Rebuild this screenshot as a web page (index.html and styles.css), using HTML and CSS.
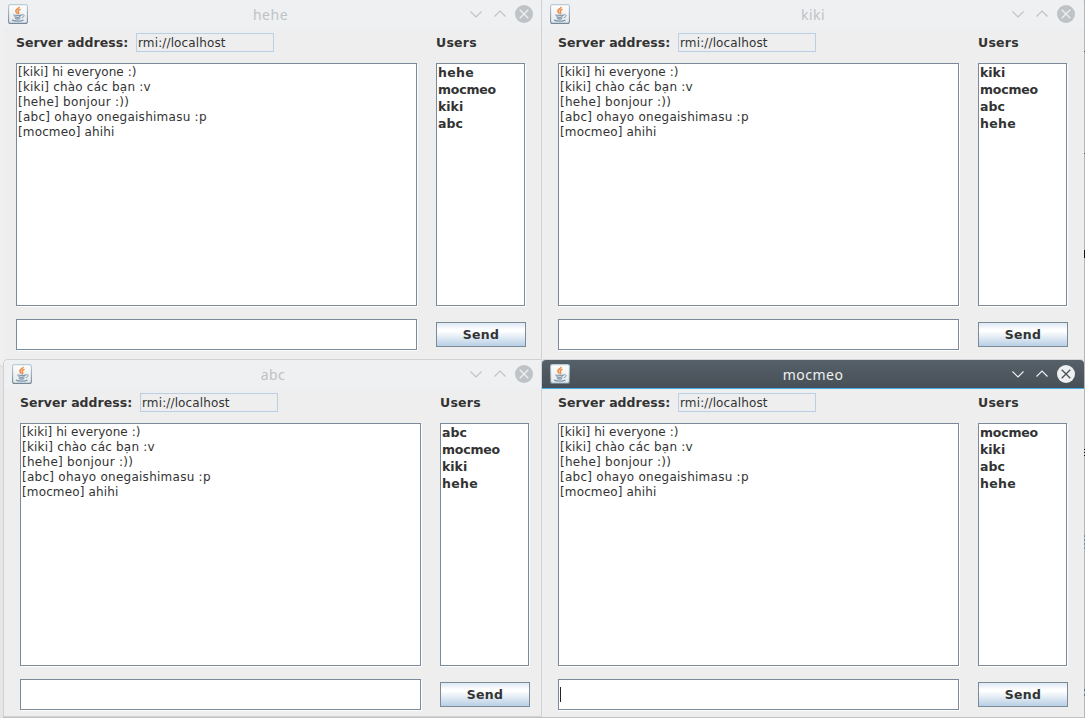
FILE: index.html
```html
<!DOCTYPE html>
<html lang="en">
<head>
<meta charset="utf-8">
<title>RMI chat</title>
<link rel="stylesheet" href="styles.css">
</head>
<body>
<svg width="0" height="0" class="defs">
  <symbol id="java" viewBox="0 0 20 20">
    <linearGradient id="tile" x1="0" y1="0" x2="0" y2="1"><stop offset="0" stop-color="#fff"/><stop offset="1" stop-color="#e4e7e9"/></linearGradient>
    <linearGradient id="edge" x1="0" y1="0" x2="0" y2="1"><stop offset="0" stop-color="#b9ccd9"/><stop offset="1" stop-color="#73889a"/></linearGradient>
    <rect x=".6" y=".6" width="18.8" height="18.8" rx="2" fill="url(#tile)" stroke="url(#edge)" stroke-width="1.1"/>
    <path d="M11 2.700c.6 1.800-3.500 2.500-3.200 4.500.2 1.200 1.300 1.600 1.700 2.600M12.500 5.300c-2.300.8-2.900 1.700-2 2.800.5.600.3 1.200-.3 1.700" fill="none" stroke="#ee8a43" stroke-width="1.500"/>
    <path d="M5.300 10.800c1.500.8 6.700.8 8.500 0M6.400 12.700c1.500.6 4.700.6 6.200 0M7 14.500c1.400.5 3.900.5 5.200 0M4 16.200c2.500 1.200 9.500 1.200 11.500-.3" fill="none" stroke="#7f98ad" stroke-width="1.300"/>
    <path d="M13.700 10.900c3.300-1 3.100 2 .1 2.800" fill="none" stroke="#7f98ad" stroke-width="1"/>
  </symbol>
  <symbol id="controls" viewBox="0 0 66 20">
    <path d="M2.500 7.500l5.500 5.500 5.500-5.500M26.500 12.500l5.500-5.500 5.500 5.500" fill="none" stroke="currentColor" stroke-width="1.100"/>
    <circle cx="56" cy="10" r="9" fill="currentColor"/>
    <path d="M51.700 5.700l8.600 8.600M60.300 5.700l-8.600 8.600" class="cross"/>
  </symbol>
</svg>
<main class="desktop">
  <section class="window hehe">
    <header class="titlebar"><svg class="java"><use href="#java"/></svg><h1 class="title">hehe</h1><svg class="controls"><use href="#controls"/></svg></header>
    <div class="content">
      <div class="address"><label class="label">Server address:</label><div class="host">rmi://localhost</div></div>
      <div class="users-label">Users</div>
      <div class="box log"><p class="l1">[kiki] hi everyone :)</p><p class="l2">[kiki] chào các bạn :v</p><p class="l3">[hehe] bonjour :))</p><p class="l4">[abc] ohayo onegaishimasu :p</p><p class="l5">[mocmeo] ahihi</p></div>
      <ul class="box users"><li class="wide">hehe</li><li class="long">mocmeo</li><li>kiki</li><li>abc</li></ul>
      <div class="box message"></div>
      <button class="send">Send</button>
    </div>
  </section>
  <section class="window kiki">
    <header class="titlebar"><svg class="java"><use href="#java"/></svg><h1 class="title">kiki</h1><svg class="controls"><use href="#controls"/></svg></header>
    <div class="content">
      <div class="address"><label class="label">Server address:</label><div class="host">rmi://localhost</div></div>
      <div class="users-label">Users</div>
      <div class="box log"><p class="l1">[kiki] hi everyone :)</p><p class="l2">[kiki] chào các bạn :v</p><p class="l3">[hehe] bonjour :))</p><p class="l4">[abc] ohayo onegaishimasu :p</p><p class="l5">[mocmeo] ahihi</p></div>
      <ul class="box users"><li>kiki</li><li class="long">mocmeo</li><li>abc</li><li class="wide">hehe</li></ul>
      <div class="box message"></div>
      <button class="send">Send</button>
    </div>
  </section>
  <section class="window abc">
    <header class="titlebar"><svg class="java"><use href="#java"/></svg><h1 class="title">abc</h1><svg class="controls"><use href="#controls"/></svg></header>
    <div class="content">
      <div class="address"><label class="label">Server address:</label><div class="host">rmi://localhost</div></div>
      <div class="users-label">Users</div>
      <div class="box log"><p class="l1">[kiki] hi everyone :)</p><p class="l2">[kiki] chào các bạn :v</p><p class="l3">[hehe] bonjour :))</p><p class="l4">[abc] ohayo onegaishimasu :p</p><p class="l5">[mocmeo] ahihi</p></div>
      <ul class="box users"><li>abc</li><li class="long">mocmeo</li><li>kiki</li><li class="wide">hehe</li></ul>
      <div class="box message"></div>
      <button class="send">Send</button>
    </div>
  </section>
  <section class="window mocmeo active">
    <header class="titlebar"><svg class="java"><use href="#java"/></svg><h1 class="title">mocmeo</h1><svg class="controls"><use href="#controls"/></svg></header>
    <div class="content">
      <div class="address"><label class="label">Server address:</label><div class="host">rmi://localhost</div></div>
      <div class="users-label">Users</div>
      <div class="box log"><p class="l1">[kiki] hi everyone :)</p><p class="l2">[kiki] chào các bạn :v</p><p class="l3">[hehe] bonjour :))</p><p class="l4">[abc] ohayo onegaishimasu :p</p><p class="l5">[mocmeo] ahihi</p></div>
      <ul class="box users"><li class="long">mocmeo</li><li>kiki</li><li>abc</li><li class="wide">hehe</li></ul>
      <div class="box message"><span class="caret"></span></div>
      <button class="send">Send</button>
    </div>
  </section>
  <i class="mark edge"></i><i class="mark m1"></i><i class="mark m2"></i><i class="mark m3"></i><i class="mark m4"></i><i class="mark m5"></i><i class="mark m6"></i>
</main>
</body>
</html>
```
FILE: styles.css
```css
* { box-sizing: border-box; }
body { margin: 0; overflow: hidden; background: #e4e5e6; color: #333; font: 12px/15px "DejaVu Sans", sans-serif; }
.defs { position: absolute; }
.desktop { position: relative; width: 1085px; height: 718px; overflow: hidden; background: #e6e6e6; }

/* Windows on the desktop */
.window { position: absolute; width: 542px; height: 360px; background: #eee; border-right: 1px solid #cfd3d7; }
.hehe { left: 0; top: 0; height: 367px; border-right-color: #eee; border-bottom: 1px solid #cfd1d3; border-radius: 0 0 0 3px; box-shadow: inset 4px 0 #eff0f1; }
.kiki { left: 541px; top: 0; width: 543px; border-left: 1px solid #cfd3d7; border-right: 0; border-radius: 0 4px 0 0; }
.abc { left: 3px; top: 359px; width: 538px; height: 358px; border: 1px solid #cfd1d3; border-right: 0; border-radius: 5px 0 0 0; box-shadow: 0 1px 0 #c3c3c3; }
.mocmeo { left: 541px; top: 359px; width: 543px; height: 358px; border: 1px solid #cfd3d7; border-width: 1px 0 0 1px; border-radius: 4px 4px 0 0; box-shadow: 0 1px 0 #c3c3c3; }

.titlebar { display: grid; grid-template-columns: 36px 1fr 36px; height: 28px; background: #eff0f1; position: relative; color: #bdc3c7; border-radius: 4px 4px 0 0; }
.java { width: 20px; height: 20px; margin: 4px 0 0 8px; }
.title { margin: 0; text-align: center; font: 14px/29px "Noto Sans", sans-serif; letter-spacing: .5px; }
.abc .title { padding-left: 1px; }
.controls { position: absolute; right: 8px; top: 4px; width: 66px; height: 20px; }
.hehe .controls, .abc .controls { right: 7px; }
.cross { fill: none; stroke: var(--cross, #eff0f1); stroke-width: 1.3; }
.active .titlebar { height: 29px; background: linear-gradient(#566069, #475057); border-bottom: 1px solid #3daee9; color: #eff0f1; margin-bottom: -1px; }
.active .controls { --cross: #475057; }

/* Chat form */
.content { display: grid; grid-template-columns: 402px 90px; grid-template-rows: 19px 243px 31px; column-gap: 18px; row-gap: 12px; padding: 5px 0 0 16px; }
.address { display: flex; }
.label { width: 120px; line-height: 20px; font-size: 12.5px; font-weight: bold; letter-spacing: .05px; }
.host { width: 138px; height: 19px; border: 1px solid #b8cfe5; padding-left: 1px; line-height: 18px; letter-spacing: .13px; }
.users-label { font-size: 12.5px; font-weight: bold; line-height: 20px; letter-spacing: .25px; }
.box { margin: 0; padding: 1px 0 0 1px; list-style: none; background: #fff; border: 1px solid #7a8a99; box-shadow: 1px 1px 0 #fff; }
.log, .users { height: 243px; margin-top: -1px; }
.log { width: 401px; }
.log p { margin: 0; white-space: pre; }
.l1 { letter-spacing: .06px; }
.l2 { letter-spacing: .2px; }
.l3 { letter-spacing: .28px; }
.l4 { letter-spacing: .26px; }
.l5 { letter-spacing: .14px; }
.users { width: 89px; padding-top: 0; }
.users li { height: 17px; line-height: 17px; font-size: 12.5px; font-weight: bold; }
.users .long { letter-spacing: -.2px; }
.users .wide { letter-spacing: .3px; }
.message { width: 401px; height: 31px; }
.caret { display: block; width: 1px; height: 15px; margin-top: 6px; background: #222; }
.send { width: 90px; height: 25px; margin-top: 3px; padding: 0; border: 1px solid #7a8a99; background: linear-gradient(#dde8f3, #fff 30%, #fff 35%, #b8cfe5); color: #333; font: bold 12.5px/22px "DejaVu Sans", sans-serif; letter-spacing: .25px; }

/* Content visible beyond the right window edge */
.mark { position: absolute; left: 1084px; width: 1px; height: 1px; background: #555; }
.edge { top: 0; height: 718px; background: #b4b7b9; }
.m1 { top: 51px; }
.m2 { top: 153px; }
.m3 { top: 250px; height: 8px; background: #111; }
.m4 { top: 449px; height: 7px; background: repeating-linear-gradient(#111 0 1px, #b4b7b9 1px 3px); }
.m5 { top: 535px; height: 16px; background: repeating-linear-gradient(#6e91ae 0 2px, #b4b7b9 2px 4px); }
.m6 { top: 689px; height: 8px; background: repeating-linear-gradient(#477aa5 0 2px, #b4b7b9 2px 5px); }
```
